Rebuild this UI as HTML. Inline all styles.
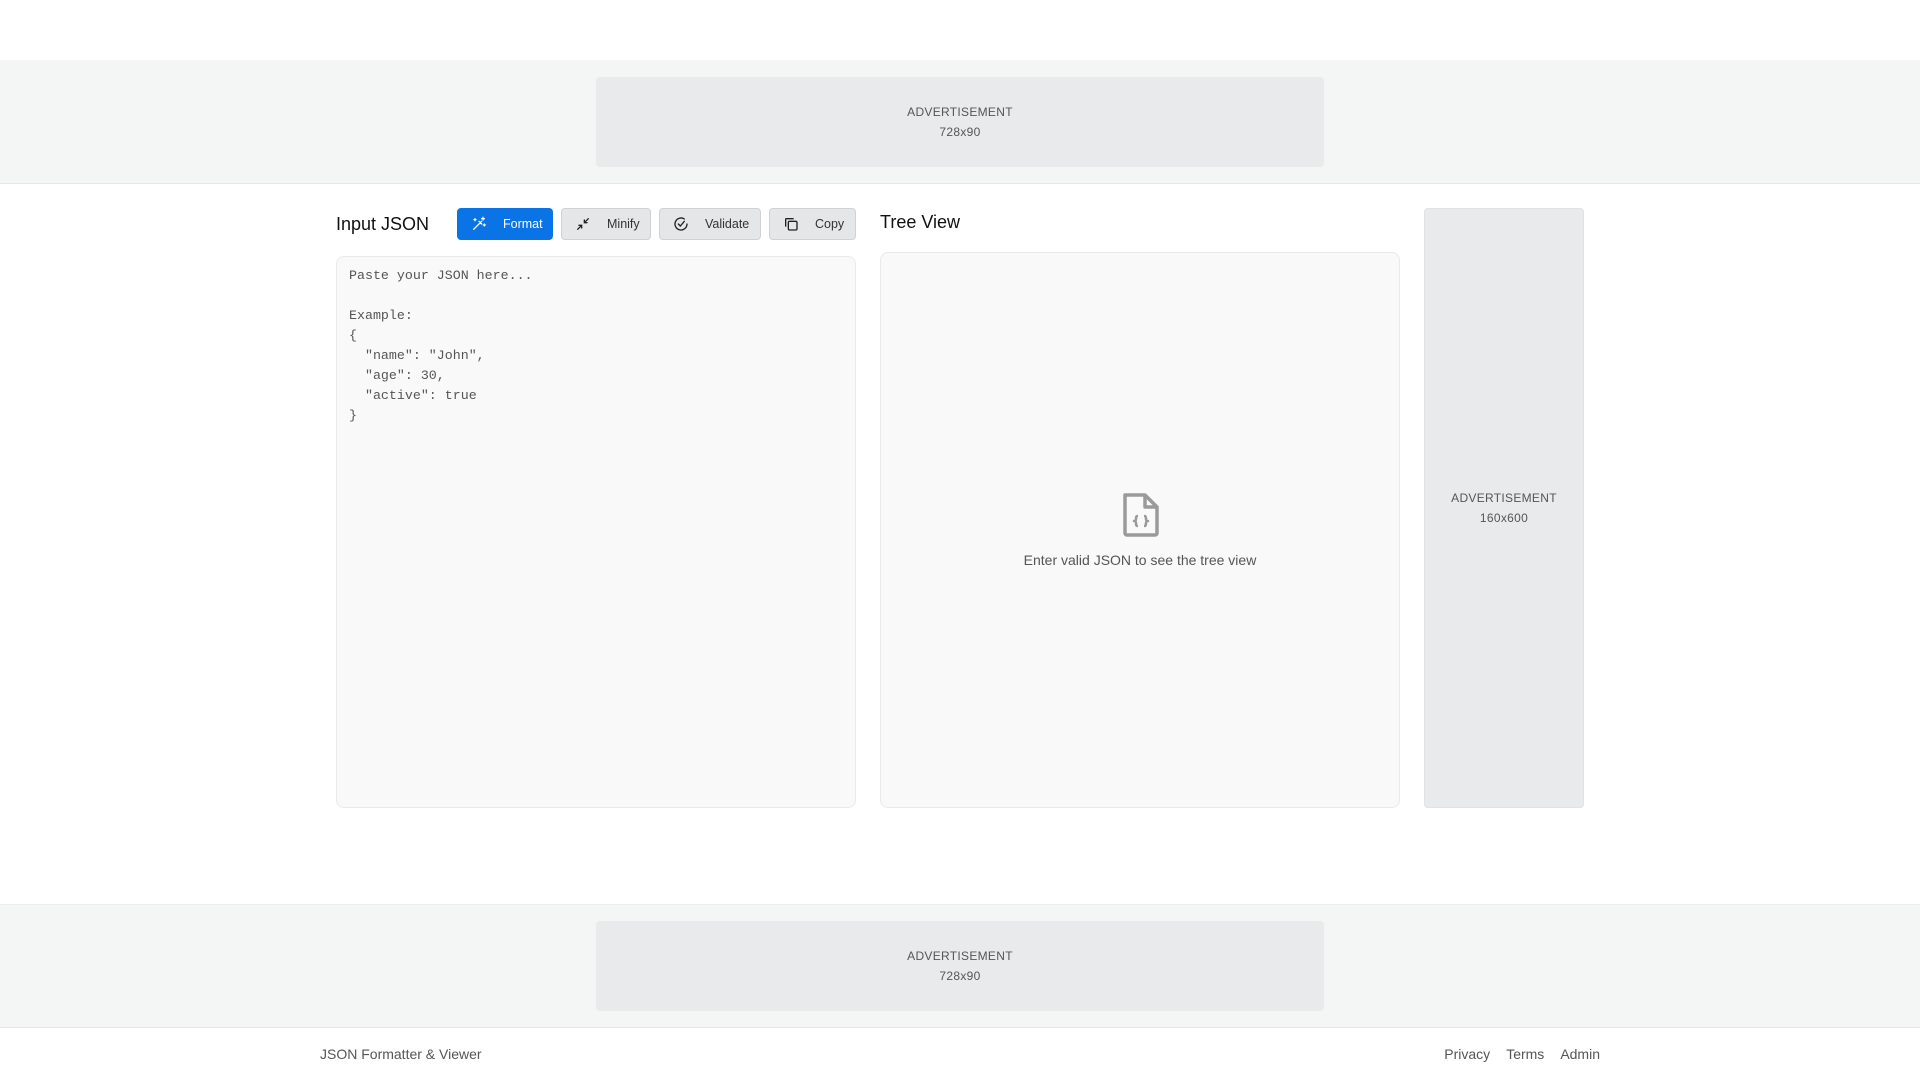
<!DOCTYPE html>
<html><head><meta charset="utf-8"><style>
*{box-sizing:border-box;margin:0;padding:0}
body{width:1920px;height:1080px;background:#fff;font-family:"Liberation Sans",sans-serif;position:relative;overflow:hidden;color:#212529}
.band{position:absolute;left:0;width:1920px;background:#f4f5f5;border-top:1px solid #ececec;border-bottom:1px solid #e6e6e6}
.ad{position:absolute;background:#e9eaeb;border-radius:4px;color:#555;font-size:12px;text-align:center;display:flex;flex-direction:column;justify-content:center;line-height:20px;letter-spacing:.3px}
.btn{position:absolute;top:208px;height:32px;border-radius:4px;border:1px solid #cfd1d3;background:#e5e6e7;font-size:12.5px;color:#333;display:flex;align-items:center;padding-left:13px}
.btn svg{margin-right:16px}
.box{position:absolute;background:#f9f9f9;border:1px solid #e9e9e9;border-radius:8px}
pre{font-family:"Liberation Mono",monospace;font-size:13.3px;line-height:20px;color:#555}
</style></head><body>
<div class="band" style="top:60px;height:124px;border-top:none"></div>
<div class="ad" style="left:596px;top:77px;width:728px;height:90px"><div>ADVERTISEMENT</div><div>728x90</div></div>

<div style="position:absolute;left:336px;top:214px;font-size:18px;color:#111">Input JSON</div>
<div class="btn" style="left:457px;width:96px;background:#0a73e6;border-color:#0a73e6;color:#fff">
<svg width="16" height="16" viewBox="0 0 24 24" fill="none" stroke="#fff" stroke-width="2" stroke-linecap="round"><path d="M4 20L16 8M12 8l4 4M18 2v4M16 4h4M6 4v3M4.5 5.5h3M20 12v3M18.5 13.5h3"/></svg>Format</div>
<div class="btn" style="left:561px;width:90px">
<svg width="16" height="16" viewBox="0 0 24 24" fill="none" stroke="#222" stroke-width="2" stroke-linecap="round"><path d="M4 20l6-6M6 14h4v4M20 4l-6 6M14 6v4h4"/></svg>Minify</div>
<div class="btn" style="left:659px;width:102px">
<svg width="16" height="16" viewBox="0 0 24 24" fill="none" stroke="#222" stroke-width="2" stroke-linecap="round"><path d="M21 12a9 9 0 1 1-4-7.5"/><path d="M8 12l3 3 6-7"/></svg>Validate</div>
<div class="btn" style="left:769px;width:87px">
<svg width="16" height="16" viewBox="0 0 24 24" fill="none" stroke="#222" stroke-width="2"><rect x="8" y="8" width="13" height="13" rx="2"/><path d="M4 16V5a1 1 0 0 1 1-1h11"/></svg>Copy</div>

<div class="box" style="left:336px;top:256px;width:520px;height:552px;padding:9px 12px"><pre>Paste your JSON here...

Example:
{
  "name": "John",
  "age": 30,
  "active": true
}</pre></div>

<div style="position:absolute;left:880px;top:212px;font-size:18px;color:#111">Tree View</div>
<div class="box" style="left:880px;top:252px;width:520px;height:556px">
<svg style="position:absolute;left:240px;top:238px" width="40" height="48" viewBox="0 0 40 48" fill="none" stroke="#9a9a9a" stroke-width="3.5" stroke-linejoin="round"><path d="M4 4h20l12 12v26a2 2 0 0 1-2 2H6a2 2 0 0 1-2-2z"/><path d="M24 4v12h12"/><path d="M17 25c-2 0-2 1-2 3s-1 2-2 2c1 0 2 0 2 2s0 3 2 3M23 25c2 0 2 1 2 3s1 2 2 2c-1 0-2 0-2 2s0 3-2 3" stroke-width="2.5"/></svg>
<div style="position:absolute;left:0;width:100%;top:299px;text-align:center;font-size:14px;color:#555">Enter valid JSON to see the tree view</div>
</div>

<div class="ad" style="left:1424px;top:208px;width:160px;height:600px;border:1px solid #e2e2e2"><div>ADVERTISEMENT</div><div>160x600</div></div>

<div class="band" style="top:904px;height:124px"></div>
<div class="ad" style="left:596px;top:921px;width:728px;height:90px"><div>ADVERTISEMENT</div><div>728x90</div></div>

<div style="position:absolute;left:320px;top:1046px;font-size:14px;color:#555">JSON Formatter &amp; Viewer</div>
<div style="position:absolute;right:320px;top:1046px;font-size:14px;color:#555;display:flex;gap:16px"><span>Privacy</span><span>Terms</span><span>Admin</span></div>
</body></html>
